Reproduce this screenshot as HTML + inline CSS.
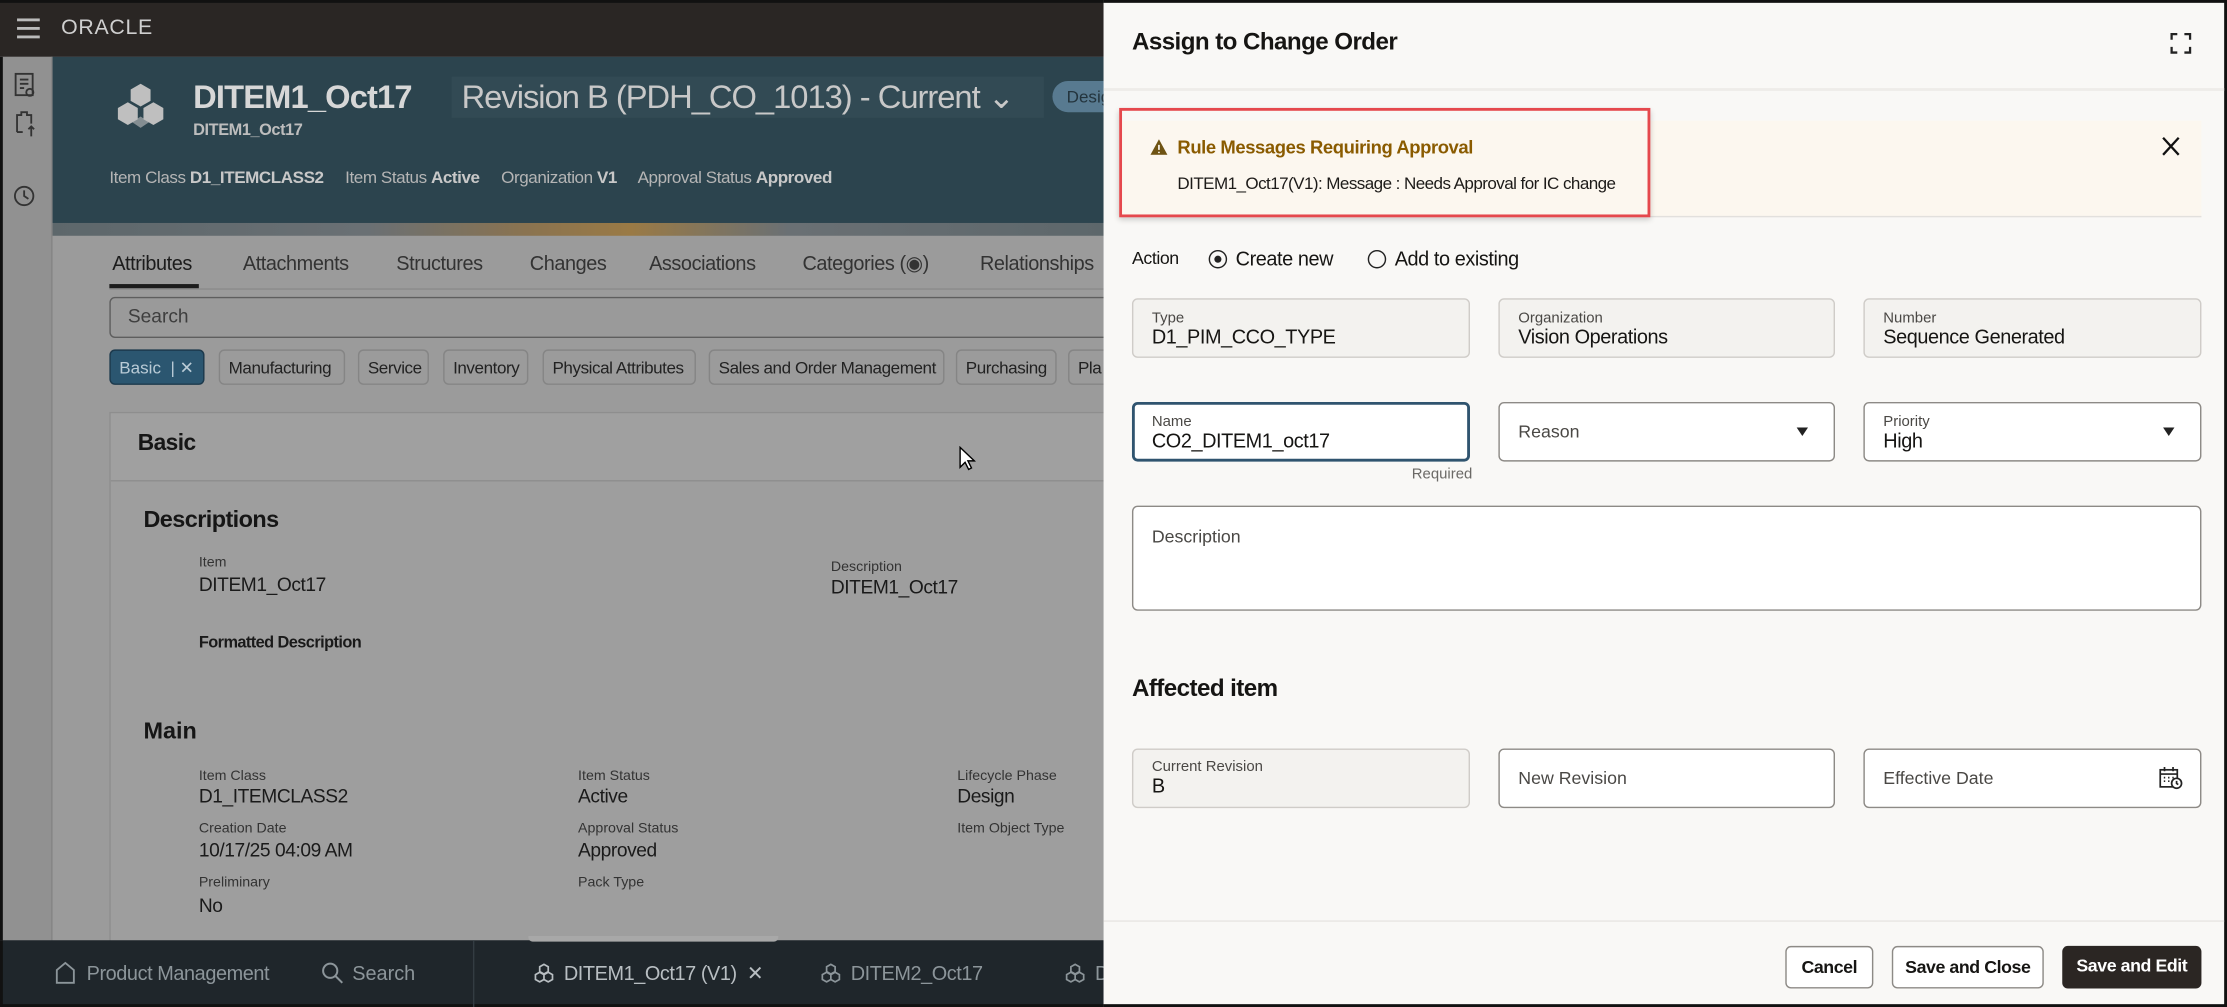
<!DOCTYPE html>
<html><head><meta charset="utf-8">
<style>
*{box-sizing:border-box;margin:0;padding:0}
html,body{width:2227px;height:1007px;overflow:hidden;background:#000}
body{font-family:"Liberation Sans",sans-serif}
#s{position:absolute;left:0;top:0;width:1568px;height:709px;transform:scale(1.42028,1.42031);transform-origin:0 0;background:#9b9b9b;overflow:hidden}
.a{position:absolute;white-space:nowrap}
.c{font-size:13px;letter-spacing:-.3px}
</style></head><body>
<div id="s">
<div class="a" style="left:0;top:0;width:777px;height:40px;background:#2a2624;border-top:2px solid #111"></div>
<div class="a" style="left:12px;top:13px;width:16px;height:2px;background:#bbb;box-shadow:0 6px 0 #bbb,0 12px 0 #bbb"></div>
<div class="a" style="left:43px;top:11px;font-size:15px;color:#cfcfcf;letter-spacing:.5px">ORACLE</div>
<div class="a" style="left:0;top:40px;width:37px;height:622px;background:#919191;border-left:2px solid #111;border-right:1px solid #858585"></div>
<svg class="a" style="left:8px;top:50px" width="20" height="100" viewBox="0 0 20 100" fill="none" stroke="#333" stroke-width="1.3"><rect x="3" y="2" width="12" height="15"/><path d="M6 6h6M6 9h6M6 12h3"/><circle cx="13" cy="15" r="2.5"/><path d="M4 43v-12h3v-2h4v2h3v6M4 43h4M14 39v7M12 41l2-2 2 2"/><circle cx="9" cy="88" r="6.5"/><path d="M9 84v4l3 2"/></svg>
<div class="a" style="left:37px;top:40px;width:740px;height:117px;background:#2c444e"></div>
<svg class="a" style="left:80px;top:58px" width="38" height="36" viewBox="0 0 38 36" fill="#bfbfbf"><path d="M19 1l7 4v8l-7 4-7-4V5z"/><path d="M10 14l7 4v8l-7 4-7-4v-8z"/><path d="M28 14l7 4v8l-7 4-7-4v-8z"/><path d="M19 24l6 4-6 4-6-4z" opacity=".6"/></svg>
<div class="a" style="left:136px;top:55px;font-size:23px;font-weight:bold;color:#d7d7d7;letter-spacing:-.6px">DITEM1_Oct17</div>
<div class="a" style="left:318px;top:54px;width:417px;height:29px;background:#324a54"></div>
<div class="a" style="left:325px;top:55px;font-size:23px;color:#c8c8c8;letter-spacing:-.7px">Revision B (PDH_CO_1013) - Current ⌄</div>
<div class="a" style="left:741px;top:57px;width:50px;height:22px;border-radius:11px;background:#587a90;color:#23343d;font-size:12px;padding:4px 0 0 10px">Desig</div>
<div class="a" style="left:136px;top:86px;font-size:11.5px;font-weight:bold;color:#bdbdbd;letter-spacing:-.3px">DITEM1_Oct17</div>
<div class="a" style="left:77px;top:118px;font-size:12px;color:#b5b5b5;letter-spacing:-.3px">Item Class <b style="color:#c8c8c8">D1_ITEMCLASS2</b>&nbsp;&nbsp;&nbsp;&nbsp; Item Status <b style="color:#c8c8c8">Active</b>&nbsp;&nbsp;&nbsp;&nbsp; Organization <b style="color:#c8c8c8">V1</b>&nbsp;&nbsp;&nbsp;&nbsp; Approval Status <b style="color:#c8c8c8">Approved</b></div>
<div class="a" style="left:37px;top:157px;width:740px;height:9px;background:linear-gradient(90deg,#5d676b 0,#6a7074 30%,#8a7350 45%,#9a7a45 55%,#6a7074 70%,#5d676b 100%)"></div>
<div class="a" style="left:79px;top:177px;font-size:14px;color:#1c1c1c;letter-spacing:-.3px">Attributes</div>
<div class="a" style="left:171px;top:177px;font-size:14px;color:#333;letter-spacing:-.3px">Attachments</div>
<div class="a" style="left:279px;top:177px;font-size:14px;color:#333;letter-spacing:-.3px">Structures</div>
<div class="a" style="left:373px;top:177px;font-size:14px;color:#333;letter-spacing:-.3px">Changes</div>
<div class="a" style="left:457px;top:177px;font-size:14px;color:#333;letter-spacing:-.3px">Associations</div>
<div class="a" style="left:565px;top:177px;font-size:14px;color:#333;letter-spacing:-.3px">Categories (◉)</div>
<div class="a" style="left:690px;top:177px;font-size:14px;color:#333;letter-spacing:-.3px">Relationships</div>
<div class="a" style="left:77px;top:200px;width:63px;height:3px;background:#1c1c1c"></div>
<div class="a" style="left:77px;top:203px;width:700px;height:1px;background:#8b8b8b"></div>
<div class="a" style="left:77px;top:209px;width:710px;height:29px;border:1px solid #5e5e5e;border-radius:4px;background:#9a9a9a"></div>
<div class="a" style="left:90px;top:215px;font-size:13.5px;color:#3e3e3e">Search</div>
<div class="a" style="left:77px;top:246px;width:67px;height:25px;border-radius:4px;background:#2b5670;border:1px solid #1d3a4d;color:#b9cbd6;font-size:12px;padding:5px 0 0 6px">Basic &nbsp;| ✕</div>
<div class="a c" style="left:154px;top:246px;width:89px;height:25px;border:1px solid #858585;border-radius:4px;font-size:12px;color:#222;padding:5px 0 0 6px">Manufacturing</div>
<div class="a c" style="left:252px;top:246px;width:50px;height:25px;border:1px solid #858585;border-radius:4px;font-size:12px;color:#222;padding:5px 0 0 6px">Service</div>
<div class="a c" style="left:312px;top:246px;width:60px;height:25px;border:1px solid #858585;border-radius:4px;font-size:12px;color:#222;padding:5px 0 0 6px">Inventory</div>
<div class="a c" style="left:382px;top:246px;width:108px;height:25px;border:1px solid #858585;border-radius:4px;font-size:12px;color:#222;padding:5px 0 0 6px">Physical Attributes</div>
<div class="a c" style="left:499px;top:246px;width:166px;height:25px;border:1px solid #858585;border-radius:4px;font-size:12px;color:#222;padding:5px 0 0 6px">Sales and Order Management</div>
<div class="a c" style="left:673px;top:246px;width:71px;height:25px;border:1px solid #858585;border-radius:4px;font-size:12px;color:#222;padding:5px 0 0 6px">Purchasing</div>
<div class="a c" style="left:752px;top:246px;width:40px;height:25px;border:1px solid #858585;border-radius:4px;font-size:12px;color:#222;padding:5px 0 0 6px">Pla</div>
<div class="a" style="left:77px;top:290px;width:710px;height:380px;border:1px solid #8e8e8e;background:#9e9e9e"></div>
<div class="a" style="left:78px;top:291px;width:700px;height:48px;background:#a0a0a0;border-bottom:1px solid #8e8e8e"></div>
<div class="a" style="left:97px;top:304px;font-size:16px;font-weight:bold;color:#161616;letter-spacing:-.4px">Basic</div>
<div class="a" style="left:101px;top:357px;font-size:16.5px;font-weight:bold;color:#161616;letter-spacing:-.4px">Descriptions</div>
<div class="a" style="left:140px;top:391px;font-size:10px;color:#333">Item</div>
<div class="a c" style="left:140px;top:404px;font-size:13.5px;color:#1a1a1a">DITEM1_Oct17</div>
<div class="a" style="left:585px;top:394px;font-size:10px;color:#333">Description</div>
<div class="a c" style="left:585px;top:406px;font-size:13.5px;color:#1a1a1a">DITEM1_Oct17</div>
<div class="a c" style="left:140px;top:447px;font-size:11.5px;font-weight:bold;color:#1a1a1a;letter-spacing:-.4px">Formatted Description</div>
<div class="a" style="left:101px;top:506px;font-size:16.5px;font-weight:bold;color:#161616">Main</div>
<div class="a" style="left:140px;top:541px;font-size:10px;color:#333">Item Class</div>
<div class="a c" style="left:140px;top:553px;font-size:13.5px;color:#1a1a1a">D1_ITEMCLASS2</div>
<div class="a" style="left:407px;top:541px;font-size:10px;color:#333">Item Status</div>
<div class="a c" style="left:407px;top:553px;font-size:13.5px;color:#1a1a1a">Active</div>
<div class="a" style="left:674px;top:541px;font-size:10px;color:#333">Lifecycle Phase</div>
<div class="a c" style="left:674px;top:553px;font-size:13.5px;color:#1a1a1a">Design</div>
<div class="a" style="left:140px;top:578px;font-size:10px;color:#333">Creation Date</div>
<div class="a c" style="left:140px;top:591px;font-size:13.5px;color:#1a1a1a">10/17/25 04:09 AM</div>
<div class="a" style="left:407px;top:578px;font-size:10px;color:#333">Approval Status</div>
<div class="a c" style="left:407px;top:591px;font-size:13.5px;color:#1a1a1a">Approved</div>
<div class="a" style="left:674px;top:578px;font-size:10px;color:#333">Item Object Type</div>
<div class="a" style="left:140px;top:616px;font-size:10px;color:#333">Preliminary</div>
<div class="a c" style="left:140px;top:630px;font-size:13.5px;color:#1a1a1a">No</div>
<div class="a" style="left:407px;top:616px;font-size:10px;color:#333">Pack Type</div>
<svg class="a" style="left:675px;top:314px" width="12" height="18" viewBox="0 0 12 18"><path d="M1 1v14l3.5-3.5 2.5 5 2-1-2.5-5H11z" fill="#fff" stroke="#000"/></svg>
<div class="a" style="left:0;top:662px;width:777px;height:47px;background:#1f262b;border-left:2px solid #111;border-bottom:2px solid #111"></div>
<div class="a" style="left:372px;top:659px;width:176px;height:4px;background:#a8a8a8;border-radius:0 0 3px 3px"></div>
<div class="a" style="left:333px;top:662px;width:1px;height:47px;background:#333c42"></div>
<svg class="a" style="left:38px;top:677px" width="16" height="16" viewBox="0 0 16 16" fill="none" stroke="#8c959a" stroke-width="1.3"><path d="M2 15V6l6-5 6 5v9z"/></svg>
<div class="a" style="left:61px;top:677px;font-size:14px;color:#8c959a;letter-spacing:-.3px">Product Management</div>
<svg class="a" style="left:226px;top:677px" width="16" height="16" viewBox="0 0 16 16" fill="none" stroke="#8c959a" stroke-width="1.4"><circle cx="6.5" cy="6.5" r="5"/><path d="M10 10l5 5"/></svg>
<div class="a" style="left:248px;top:677px;font-size:14px;color:#8c959a">Search</div>
<svg class="a" style="left:376px;top:678px" width="14" height="14" viewBox="0 0 14 14" fill="none" stroke="#b8bec2" stroke-width="1.2"><path d="M7 1l3 1.7v3.4L7 7.8 4 6.1V2.7zM4 6.5l3 1.7v3.4L4 13.3 1 11.6V8.2zM10 6.5l3 1.7v3.4l-3 1.7-3-1.7V8.2z"/></svg>
<div class="a" style="left:397px;top:677px;font-size:14px;color:#b8bec2;letter-spacing:-.3px">DITEM1_Oct17 (V1) &nbsp;✕</div>
<svg class="a" style="left:578px;top:678px" width="14" height="14" viewBox="0 0 14 14" fill="none" stroke="#8c959a" stroke-width="1.2"><path d="M7 1l3 1.7v3.4L7 7.8 4 6.1V2.7zM4 6.5l3 1.7v3.4L4 13.3 1 11.6V8.2zM10 6.5l3 1.7v3.4l-3 1.7-3-1.7V8.2z"/></svg>
<div class="a" style="left:599px;top:677px;font-size:14px;color:#8c959a;letter-spacing:-.3px">DITEM2_Oct17</div>
<svg class="a" style="left:750px;top:678px" width="14" height="14" viewBox="0 0 14 14" fill="none" stroke="#8c959a" stroke-width="1.2"><path d="M7 1l3 1.7v3.4L7 7.8 4 6.1V2.7zM4 6.5l3 1.7v3.4L4 13.3 1 11.6V8.2zM10 6.5l3 1.7v3.4l-3 1.7-3-1.7V8.2z"/></svg>
<div class="a" style="left:771px;top:677px;font-size:14px;color:#8c959a">D</div>
<div class="a" style="left:777px;top:0;width:791px;height:709px;background:#f9f8f6;border-top:2px solid #111;border-right:2px solid #111;border-bottom:2px solid #111"></div>
<div class="a" style="left:797px;top:20px;font-size:17px;font-weight:bold;color:#161513;letter-spacing:-.4px">Assign to Change Order</div>
<svg class="a" style="left:1528px;top:23px" width="15" height="15" viewBox="0 0 15 15" fill="none" stroke="#222" stroke-width="1.6"><path d="M1 5V1h4M10 1h4v4M14 10v4h-4M5 14H1v-4"/></svg>
<div class="a" style="left:777px;top:62px;width:789px;height:2px;background:#eeece9"></div>
<div class="a" style="left:789px;top:85px;width:761px;height:67px;background:#fcf7ef"></div>
<div class="a" style="left:789px;top:152px;width:761px;height:1px;background:#e2e0dd"></div>
<div class="a" style="left:788px;top:76px;width:374px;height:77px;border:2px solid #e5484d;box-shadow:0 2px 4px rgba(0,0,0,.2)"></div>
<svg class="a" style="left:810px;top:98px" width="12" height="11" viewBox="0 0 12 11"><path d="M6 0l6 11H0z" fill="#6e5313"/><path d="M6 4v3.5M6 8.8v1" stroke="#fcf7ef" stroke-width="1.2"/></svg>
<div class="a" style="left:829px;top:96px;font-size:13px;font-weight:bold;color:#8a5b00;letter-spacing:-.3px">Rule Messages Requiring Approval</div>
<div class="a" style="left:829px;top:122px;font-size:12px;color:#1d1b19;letter-spacing:-.4px">DITEM1_Oct17(V1): Message : Needs Approval for IC change</div>
<svg class="a" style="left:1522px;top:96px" width="13" height="14" viewBox="0 0 13 14" stroke="#111" stroke-width="1.6"><path d="M1 1l11 12M12 1L1 13"/></svg>
<div class="a" style="left:797px;top:175px;font-size:12.5px;color:#161513;letter-spacing:-.3px">Action</div>
<div class="a" style="left:851px;top:176px;width:13px;height:13px;border:1.3px solid #222;border-radius:50%"></div>
<div class="a" style="left:855px;top:180px;width:5px;height:5px;background:#222;border-radius:50%"></div>
<div class="a" style="left:870px;top:174px;font-size:14px;color:#161513;letter-spacing:-.3px">Create new</div>
<div class="a" style="left:963px;top:176px;width:13px;height:13px;border:1.3px solid #222;border-radius:50%"></div>
<div class="a" style="left:982px;top:174px;font-size:14px;color:#161513;letter-spacing:-.3px">Add to existing</div>
<div class="a" style="left:797px;top:210px;width:238px;height:42px;border:1px solid #cfccc8;border-radius:4px;background:#f3f2ef"></div>
<div class="a" style="left:811px;top:218px;font-size:10.5px;color:#4a4845">Type</div>
<div class="a c" style="left:811px;top:229px;font-size:14px;color:#161513">D1_PIM_CCO_TYPE</div>
<div class="a" style="left:1055px;top:210px;width:237px;height:42px;border:1px solid #cfccc8;border-radius:4px;background:#f3f2ef"></div>
<div class="a" style="left:1069px;top:218px;font-size:10.5px;color:#4a4845">Organization</div>
<div class="a c" style="left:1069px;top:229px;font-size:14px;color:#161513">Vision Operations</div>
<div class="a" style="left:1312px;top:210px;width:238px;height:42px;border:1px solid #cfccc8;border-radius:4px;background:#f3f2ef"></div>
<div class="a" style="left:1326px;top:218px;font-size:10.5px;color:#4a4845">Number</div>
<div class="a c" style="left:1326px;top:229px;font-size:14px;color:#161513">Sequence Generated</div>
<div class="a" style="left:797px;top:283px;width:238px;height:42px;border:2px solid #30546f;border-radius:4px;background:#fff"></div>
<div class="a" style="left:811px;top:291px;font-size:10.5px;color:#4a4845">Name</div>
<div class="a c" style="left:811px;top:302px;font-size:14px;color:#161513">CO2_DITEM1_oct17</div>
<div class="a" style="left:994px;top:328px;font-size:10.5px;color:#6b6966">Required</div>
<div class="a" style="left:1055px;top:283px;width:237px;height:42px;border:1px solid #8d8a86;border-radius:4px;background:#fff"></div>
<div class="a" style="left:1069px;top:297px;font-size:12.5px;color:#4a4845">Reason</div>
<div class="a" style="left:1265px;top:301px;border-left:4.5px solid transparent;border-right:4.5px solid transparent;border-top:6px solid #222"></div>
<div class="a" style="left:1312px;top:283px;width:238px;height:42px;border:1px solid #8d8a86;border-radius:4px;background:#fff"></div>
<div class="a" style="left:1326px;top:291px;font-size:10.5px;color:#4a4845">Priority</div>
<div class="a c" style="left:1326px;top:302px;font-size:14px;color:#161513">High</div>
<div class="a" style="left:1523px;top:301px;border-left:4.5px solid transparent;border-right:4.5px solid transparent;border-top:6px solid #222"></div>
<div class="a" style="left:797px;top:356px;width:753px;height:74px;border:1px solid #8d8a86;border-radius:4px;background:#fff"></div>
<div class="a" style="left:811px;top:371px;font-size:12.5px;color:#4a4845">Description</div>
<div class="a" style="left:797px;top:475px;font-size:17px;font-weight:bold;color:#161513;letter-spacing:-.4px">Affected item</div>
<div class="a" style="left:797px;top:527px;width:238px;height:42px;border:1px solid #cfccc8;border-radius:4px;background:#f3f2ef"></div>
<div class="a" style="left:811px;top:534px;font-size:10.5px;color:#4a4845">Current Revision</div>
<div class="a" style="left:811px;top:545px;font-size:14px;color:#161513">B</div>
<div class="a" style="left:1055px;top:527px;width:237px;height:42px;border:1px solid #8d8a86;border-radius:4px;background:#fff"></div>
<div class="a" style="left:1069px;top:541px;font-size:12.5px;color:#4a4845">New Revision</div>
<div class="a" style="left:1312px;top:527px;width:238px;height:42px;border:1px solid #8d8a86;border-radius:4px;background:#fff"></div>
<div class="a" style="left:1326px;top:541px;font-size:12.5px;color:#4a4845">Effective Date</div>
<svg class="a" style="left:1520px;top:539px" width="17" height="17" viewBox="0 0 17 17" fill="none" stroke="#222" stroke-width="1.2"><rect x="1" y="3" width="12" height="12"/><path d="M4 1v3M10 1v3M1 6h12M3.5 8.5h1M6.5 8.5h1M9.5 8.5h1M3.5 11h1M6.5 11h1"/><circle cx="12.5" cy="12.5" r="3.5" fill="#fff"/><path d="M12.5 10.8v1.8l1.2.8"/></svg>
<div class="a" style="left:777px;top:648px;width:789px;height:1px;background:#e8e6e3"></div>
<div class="a" style="left:1257px;top:666px;width:62px;height:30px;border:1px solid #8d8a86;border-radius:4px;background:#fff;font-size:12.5px;font-weight:bold;color:#161513;text-align:center;padding-top:7px;letter-spacing:-.3px">Cancel</div>
<div class="a" style="left:1332px;top:666px;width:107px;height:30px;border:1px solid #8d8a86;border-radius:4px;background:#fff;font-size:12.5px;font-weight:bold;color:#161513;text-align:center;padding-top:7px;letter-spacing:-.3px">Save and Close</div>
<div class="a" style="left:1452px;top:666px;width:98px;height:30px;border-radius:4px;background:#2b2623;font-size:12.5px;font-weight:bold;color:#fff;text-align:center;padding-top:7px;letter-spacing:-.3px">Save and Edit</div>
</div>
</body></html>
